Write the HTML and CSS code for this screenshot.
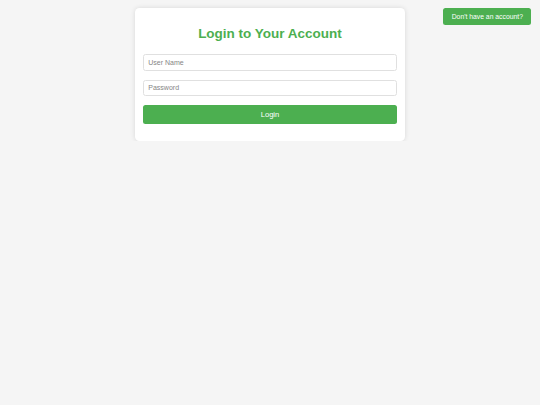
FILE: index.html
```html
<!DOCTYPE html>
<html lang="en">
<head>
<meta charset="utf-8">
<title>Login</title>
<link rel="stylesheet" href="styles.css">
</head>
<body>
<a class="signup" href="#">Don't have an account?</a>
<div class="card">
  <h2 class="title">Login to Your Account</h2>
  <form class="form">
    <input class="field" type="text" placeholder="User Name">
    <input class="field" type="password" placeholder="Password">
    <button class="submit" type="button">Login</button>
  </form>
</div>
</body>
</html>
```

FILE: styles.css
```css
html, body {
  margin: 0;
  padding: 0;
}
body {
  background: #f5f5f5;
  font-family: "Liberation Sans", Arial, sans-serif;
  padding-top: 8px;
}
.signup {
  position: absolute;
  top: 8.3px;
  right: 8.7px;
  width: 88px;
  height: 16.4px;
  box-sizing: border-box;
  display: flex;
  align-items: center;
  justify-content: center;
  background: #4caf50;
  color: #fff;
  font-size: 6.8px;
  text-decoration: none;
  border-radius: 2.5px;
}
.card {
  width: 270px;
  box-sizing: border-box;
  margin: 0 auto;
  background: #fff;
  border-radius: 4.5px;
  box-shadow: 0 0 5px rgba(0, 0, 0, 0.12);
  padding: 17.9px 8px 16.7px;
}
.title {
  margin: 0;
  text-align: center;
  color: #4caf50;
  font-size: 13.5px;
  font-weight: bold;
  line-height: 15px;
}
.form {
  display: flex;
  flex-direction: column;
  gap: 9px;
  margin-top: 13.4px;
}
.field {
  height: 16.3px;
  box-sizing: border-box;
  border: 1px solid #e0e0e0;
  border-radius: 2.5px;
  padding: 0 4.3px;
  font-family: "Liberation Sans", Arial, sans-serif;
  font-size: 7px;
  color: #333;
  background: #fff;
  margin: 0;
  outline: none;
}
.field::placeholder {
  color: #858585;
}
.submit {
  height: 19px;
  border: none;
  border-radius: 2.5px;
  background: #4caf50;
  color: #fff;
  font-family: "Liberation Sans", Arial, sans-serif;
  font-size: 7.6px;
  margin: 0;
  padding: 0;
}
```
